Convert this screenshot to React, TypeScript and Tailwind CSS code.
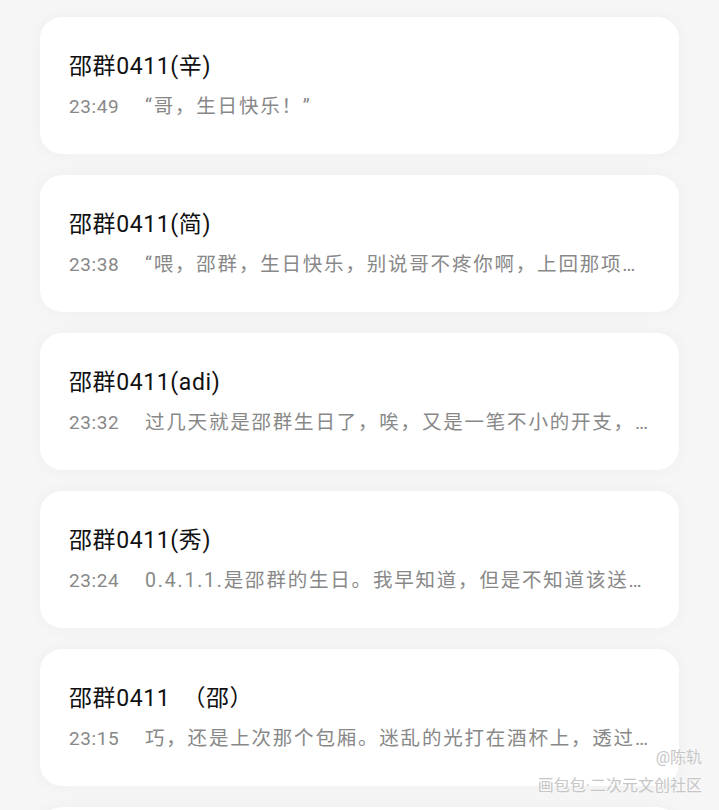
const font = { fontFamily: 'Roboto, "Noto Sans CJK SC", "Noto Sans", sans-serif' };

const items = [
  { title: "邵群0411(辛)", time: "23:49", msg: "“哥，生日快乐！”" },
  { title: "邵群0411(简)", time: "23:38", msg: "“喂，邵群，生日快乐，别说哥不疼你啊，上回那项目的事" },
  { title: "邵群0411(adi)", time: "23:32", msg: "过几天就是邵群生日了，唉，又是一笔不小的开支，还得" },
  { title: "邵群0411(秀)", time: "23:24", msg: "0.4.1.1.是邵群的生日。我早知道，但是不知道该送什么" },
  { title: "邵群0411　（邵）", time: "23:15", msg: "巧，还是上次那个包厢。迷乱的光打在酒杯上，透过玻璃" },
  { title: "邵群0411(李)", time: "23:02", msg: "“生日快乐。”" },
];

function Card({ title, time, msg }: { title: string; time: string; msg: string }) {
  return (
    <div className="bg-white rounded-[22px] shadow-[0_0_18px_rgba(0,0,0,0.035)] px-[29px] pt-[34px] pb-[33px]">
      <div className="text-[23px] leading-8 text-[#111111] tracking-[0.6px]">{title}</div>
      <div className="flex items-center mt-[10px] leading-7 text-[#888888]">
        <span className="w-[76px] shrink-0 text-[19px] tracking-[0.6px]">{time}</span>
        <span className="flex-1 min-w-0 truncate text-[19.5px] tracking-[1.8px]">{msg}</span>
      </div>
    </div>
  );
}

export default function App() {
  return (
    <main style={font} className="relative w-[719px] h-[810px] overflow-hidden bg-[#f6f6f6]">
      <div className="flex flex-col gap-[21px] px-10 pt-[17px]">
        {items.map((it) => (
          <Card key={it.time} {...it} />
        ))}
      </div>

      {/* watermark */}
      <div className="absolute right-[17px] top-[744px] flex flex-col items-end text-[16px] leading-[28px] text-[#c6c6c6] [font-feature-settings:'halt'] [text-shadow:0_0_2px_#ffffff]">
        <span>@陈轨</span>
        <span>画包包·二次元文创社区</span>
      </div>
    </main>
  );
}
